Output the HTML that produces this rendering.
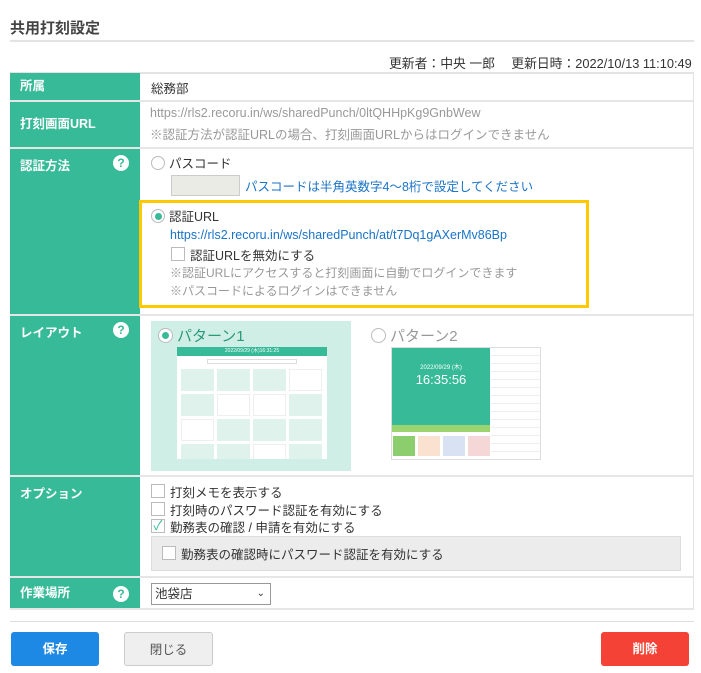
<!DOCTYPE html>
<html><head><meta charset="utf-8"><style>
*{box-sizing:border-box;margin:0;padding:0}
body{width:701px;height:673px;background:#fff;font-family:"Liberation Sans","Noto Sans CJK JP",sans-serif;font-size:12.5px;color:#333;position:relative;overflow:hidden}
.a{position:absolute}
.lab{position:absolute;left:10px;width:130px;background:#36ba98;color:#fff;font-weight:bold;padding-left:10px;border-bottom:2px solid #e6e6e6}
.row{position:absolute;left:140px;width:554px;border-bottom:2px solid #e6e6e6}
.q{position:absolute;left:103px;width:16px;height:16px;border-radius:50%;background:#fff;color:#36ba98;font-size:12px;text-align:center;line-height:16px;font-weight:bold}
.rad{position:absolute;width:14px;height:14px;border-radius:50%;border:1px solid #bbb;background:#fff}
.rad.on::after{content:"";position:absolute;left:3px;top:3px;width:7px;height:7px;border-radius:50%;background:#36ba98}
.cb{position:absolute;width:14px;height:14px;border:1px solid #bbb;background:#fff}
.gray{color:#999}
.btn{position:absolute;top:632px;height:34px;border-radius:3px;text-align:center;line-height:34px;font-weight:bold;font-size:12.5px}
</style></head><body>
<div class="a" style="left:10px;top:17px;font-size:15px;font-weight:bold;color:#444">共用打刻設定</div>
<div class="a" style="left:10px;top:40px;width:684px;height:2px;background:#e3e3e3"></div>
<div class="a" style="left:389px;top:53px;font-size:12.8px;color:#333">更新者：中央 一郎　 更新日時：2022/10/13 11:10:49</div>
<div class="a" style="left:10px;top:72px;width:684px;height:538px;border:1px solid #e3e3e3;border-top:2px solid #e3e3e3"></div>

<div class="lab" style="top:73px;height:29px;line-height:27px">所属</div>
<div class="row" style="top:73px;height:29px"><div class="a" style="left:11px;top:5px">総務部</div></div>

<div class="lab" style="top:102px;height:47px;line-height:44px">打刻画面URL</div>
<div class="row" style="top:102px;height:47px;color:#999">
<div class="a" style="left:10px;top:4px">https://rls2.recoru.in/ws/sharedPunch/0ltQHHpKg9GnbWew</div>
<div class="a" style="left:10px;top:22px">※認証方法が認証URLの場合、打刻画面URLからはログインできません</div></div>

<div class="lab" style="top:149px;height:167px;padding-top:6px">認証方法<div class="q" style="top:6px">?</div></div>
<div class="row" style="top:149px;height:167px">
<div class="rad" style="left:11px;top:7px"></div><div class="a" style="left:29px;top:4px">パスコード</div>
<div class="a" style="left:31px;top:26px;width:69px;height:21px;background:#ebebe6;border:1px solid #ccc"></div>
<div class="a" style="left:105px;top:27px;color:#1a73c8">パスコードは半角英数字4～8桁で設定してください</div>
</div>
<div class="a" style="left:139px;top:200px;width:450px;height:108px;border:3px solid #ffc800"></div>
<div class="rad on" style="left:151px;top:209px"></div><div class="a" style="left:169px;top:206px">認証URL</div>
<div class="a" style="left:170px;top:228px;color:#1a73c8">https://rls2.recoru.in/ws/sharedPunch/at/t7Dq1gAXerMv86Bp</div>
<div class="cb" style="left:171px;top:247px"></div><div class="a" style="left:190px;top:245px">認証URLを無効にする</div>
<div class="a gray" style="left:170px;top:264px;font-size:12px">※認証URLにアクセスすると打刻画面に自動でログインできます</div>
<div class="a gray" style="left:170px;top:282px;font-size:12px">※パスコードによるログインはできません</div>

<div class="lab" style="top:316px;height:161px;padding-top:6px">レイアウト<div class="q" style="top:6px">?</div></div>
<div class="row" style="top:316px;height:161px"></div>
<div class="a" style="left:151px;top:321px;width:200px;height:150px;background:#cfeee5"></div>
<div class="rad on" style="left:158px;top:328px;width:15px;height:15px"></div>
<div class="a" style="left:177px;top:325px;font-size:15px;color:#2a9a78">パターン1</div>
<div class="a" style="left:177px;top:347px;width:150px;height:112px;background:#fff;overflow:hidden">
 <div style="height:9px;background:#36ba98;color:#fff;font-size:5px;text-align:center;line-height:9px">2022/09/29 (木)16:31:25</div>
 <div style="margin:3px 30px;height:5px;border:1px solid #ddd"></div>
 <div style="display:grid;grid-template-columns:repeat(4,33px);gap:3px;padding:2px 4px">
  <div style="height:22px;background:#dff3ec"></div><div style="height:22px;background:#dff3ec"></div><div style="height:22px;background:#dff3ec"></div><div style="height:22px;background:#fff;border:1px solid #eee"></div>
  <div style="height:22px;background:#dff3ec"></div><div style="height:22px;background:#fff;border:1px solid #eee"></div><div style="height:22px;background:#fff;border:1px solid #eee"></div><div style="height:22px;background:#dff3ec"></div>
  <div style="height:22px;background:#fff;border:1px solid #eee"></div><div style="height:22px;background:#dff3ec"></div><div style="height:22px;background:#dff3ec"></div><div style="height:22px;background:#dff3ec"></div>
  <div style="height:22px;background:#dff3ec"></div><div style="height:22px;background:#dff3ec"></div><div style="height:22px;background:#fff;border:1px solid #eee"></div><div style="height:22px;background:#dff3ec"></div>
 </div></div>
<div class="rad" style="left:371px;top:328px;width:15px;height:15px"></div>
<div class="a" style="left:390px;top:325px;font-size:15px;color:#999">パターン2</div>
<div class="a" style="left:391px;top:347px;width:150px;height:113px;background:#fff;border:1px solid #ddd;overflow:hidden">
 <div class="a" style="left:0;top:0;width:98px;height:77px;background:#36ba98;color:#fff;text-align:center"><div style="margin-top:14px;font-size:6px">2022/09/29 (木)</div><div style="font-size:13px;margin-top:1px">16:35:56</div></div>
 <div class="a" style="left:0;top:77px;width:98px;height:7px;background:#9bd36e"></div>
 <div class="a" style="left:1px;top:88px;width:22px;height:20px;background:#8ccd6d"></div>
 <div class="a" style="left:26px;top:88px;width:22px;height:20px;background:#fbe2d0"></div>
 <div class="a" style="left:51px;top:88px;width:22px;height:20px;background:#d9e2f2"></div>
 <div class="a" style="left:76px;top:88px;width:22px;height:20px;background:#f6d7d7"></div>
 <div class="a" style="left:99px;top:0;width:51px;height:113px;background:repeating-linear-gradient(#fff 0 7px,#eee 7px 8px)"></div>
</div>

<div class="lab" style="top:477px;height:101px;padding-top:6px">オプション</div>
<div class="row" style="top:477px;height:101px">
<div class="cb" style="left:11px;top:7px"></div><div class="a" style="left:30px;top:5px">打刻メモを表示する</div>
<div class="cb" style="left:11px;top:25px"></div><div class="a" style="left:30px;top:23px">打刻時のパスワード認証を有効にする</div>
<div class="cb" style="left:11px;top:42px;color:#36ba98;font-size:13px;line-height:12px;text-align:center">✓</div><div class="a" style="left:30px;top:40px">勤務表の確認 / 申請を有効にする</div>
<div class="a" style="left:11px;top:59px;width:530px;height:35px;background:#ececec;border:1px solid #ddd"></div>
<div class="cb" style="left:22px;top:69px"></div><div class="a" style="left:41px;top:67px">勤務表の確認時にパスワード認証を有効にする</div>
</div>

<div class="lab" style="top:578px;height:32px;line-height:30px">作業場所<div class="q" style="top:8px">?</div></div>
<div class="row" style="top:578px;height:32px">
<div class="a" style="left:11px;top:5px;width:120px;height:22px;border:1px solid #999;padding-left:3px;line-height:20px">池袋店<span style="position:absolute;right:5px;top:0;font-size:10px">&#8964;</span></div></div>

<div class="a" style="left:10px;top:621px;width:684px;height:1px;background:#ddd"></div>
<div class="btn" style="left:11px;width:88px;background:#1e88e5;color:#fff">保存</div>
<div class="btn" style="left:124px;width:89px;background:#efefef;border:1px solid #ccc;color:#555;font-weight:normal">閉じる</div>
<div class="btn" style="left:601px;width:88px;background:#f44336;color:#fff">削除</div>
</body></html>
